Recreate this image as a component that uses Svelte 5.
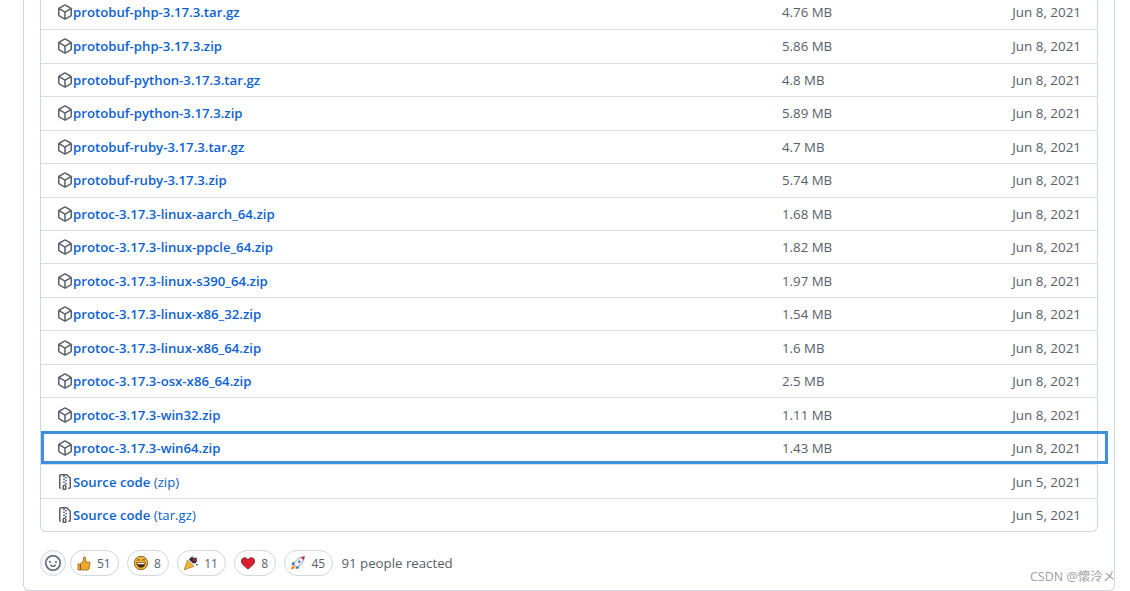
<script>
const assets = [
  ['protobuf-php-3.17.3.tar.gz', '4.76 MB', 'Jun 8, 2021'],
  ['protobuf-php-3.17.3.zip', '5.86 MB', 'Jun 8, 2021'],
  ['protobuf-python-3.17.3.tar.gz', '4.8 MB', 'Jun 8, 2021'],
  ['protobuf-python-3.17.3.zip', '5.89 MB', 'Jun 8, 2021'],
  ['protobuf-ruby-3.17.3.tar.gz', '4.7 MB', 'Jun 8, 2021'],
  ['protobuf-ruby-3.17.3.zip', '5.74 MB', 'Jun 8, 2021'],
  ['protoc-3.17.3-linux-aarch_64.zip', '1.68 MB', 'Jun 8, 2021'],
  ['protoc-3.17.3-linux-ppcle_64.zip', '1.82 MB', 'Jun 8, 2021'],
  ['protoc-3.17.3-linux-s390_64.zip', '1.97 MB', 'Jun 8, 2021'],
  ['protoc-3.17.3-linux-x86_32.zip', '1.54 MB', 'Jun 8, 2021'],
  ['protoc-3.17.3-linux-x86_64.zip', '1.6 MB', 'Jun 8, 2021'],
  ['protoc-3.17.3-osx-x86_64.zip', '2.5 MB', 'Jun 8, 2021'],
  ['protoc-3.17.3-win32.zip', '1.11 MB', 'Jun 8, 2021'],
  ['protoc-3.17.3-win64.zip', '1.43 MB', 'Jun 8, 2021']
]
const sources = [['(zip)', 'Jun 5, 2021'], ['(tar.gz)', 'Jun 5, 2021']]
</script>

<div class="page">
  <div class="release">
    <div class="assets">
      {#each assets as a}
        <div class="row">
          <svg class="ico" viewBox="0 0 16 16" width="16" height="16"><path fill="#57606a" fill-rule="evenodd" d="M8.878.392a1.75 1.75 0 00-1.756 0l-5.25 3.045A1.75 1.75 0 001 4.951v6.098c0 .624.332 1.2.872 1.514l5.25 3.045a1.75 1.75 0 001.756 0l5.25-3.045c.54-.313.872-.89.872-1.514V4.951c0-.624-.332-1.2-.872-1.514L8.878.392zM7.875 1.69a.25.25 0 01.25 0l4.63 2.685L8 7.133 3.245 4.375l4.63-2.685zM2.5 5.677v5.372c0 .09.047.171.125.216l4.625 2.683V8.432L2.5 5.677zm6.25 8.271l4.625-2.683a.25.25 0 00.125-.216V5.677L8.75 8.432v5.516z"/></svg>
          <span class="name">{a[0]}</span>
          <span class="size">{a[1]}</span>
          <span class="date">{a[2]}</span>
        </div>
      {/each}
      {#each sources as s}
        <div class="row">
          <svg class="ico" viewBox="0 0 16 16" width="16" height="16"><path fill="#57606a" fill-rule="evenodd" d="M3.5 1.75a.25.25 0 01.25-.25h3a.75.75 0 000 1.5h.5a.75.75 0 000-1.5h2.086a.25.25 0 01.177.073l2.914 2.914a.25.25 0 01.073.177v8.586a.25.25 0 01-.25.25h-.5a.75.75 0 000 1.5h.5A1.75 1.75 0 0014 13.25V4.664c0-.464-.184-.909-.513-1.237L10.573.513A1.75 1.75 0 009.336 0H3.75A1.75 1.75 0 002 1.750v11.5c0 .649.353 1.214.874 1.515a.75.75 0 10.752-1.298.25.25 0 01-.126-.217V1.750zM8.750 3a.75.75 0 000 1.500h.5a.75.75 0 000-1.500h-.5zM6 5.250a.75.75 0 01.75-.75h.5a.75.75 0 010 1.500h-.5A.75.75 0 016 5.250zm2 1.500A.75.75 0 018.750 6h.5a.75.75 0 010 1.500h-.5A.75.75 0 018 6.750zm-1.250.75a.75.75 0 000 1.500h.5a.75.75 0 000-1.500h-.5zM8 9.750A.75.75 0 018.750 9h.5a.75.75 0 010 1.500h-.5A.75.75 0 018 9.750zm-.75.750a1.750 1.750 0 00-1.750 1.750v3c0 .414.336.750.750.750h2.500a.750.750 0 00.750-.750v-3a1.750 1.750 0 00-1.750-1.750h-.5zM7 12.250a.250.250 0 01.250-.250h.5a.250.250 0 01.250.250v2.250H7v-2.250z"/></svg>
          <span class="name">Source code <span class="ext">{s[0]}</span></span>
          <span class="size"></span>
          <span class="date">{s[1]}</span>
        </div>
      {/each}
    </div>

    <div class="reactions">
      <button class="add" aria-label="Add reaction">
        <svg viewBox="0 0 16 16" width="16" height="16"><path fill="#57606a" fill-rule="evenodd" d="M1.5 8a6.5 6.5 0 1113 0 6.5 6.5 0 01-13 0zM8 0a8 8 0 100 16A8 8 0 008 0zM5 8a1 1 0 100-2 1 1 0 000 2zm7-1a1 1 0 11-2 0 1 1 0 012 0zM5.32 9.636a.75.75 0 011.038.175l.007.009c.103.118.22.222.35.31.264.178.683.37 1.285.37.602 0 1.02-.192 1.285-.371.13-.088.247-.192.35-.31l.007-.008a.75.75 0 111.222.87l-.614-.431c.614.43.614.431.613.431v.001l-.001.002-.002.003-.005.007-.014.019a1.984 1.984 0 01-.184.213c-.16.166-.338.316-.53.445-.63.418-1.37.638-2.127.629-.946 0-1.652-.308-2.126-.63a3.32 3.32 0 01-.715-.657l-.014-.02-.005-.006-.002-.003v-.002h-.001l.613-.432-.614.43a.75.75 0 01.183-1.044z"/></svg>
      </button>
      <span class="pill">
        <svg viewBox="0 0 16 16" width="16" height="16"><path fill="#f0a92d" stroke="#7d5510" stroke-width=".7" d="M2 9h2.500v6H2zM4.500 9l2.800-3.500L7.800 2c1.400-.3 2.300.8 2 2.600L9.500 7H13c1 0 1.400 1 1 1.800L13 14c-.2.600-.7 1-1.300 1H4.500z"/></svg>
        <span>51</span>
      </span>
      <span class="pill">
        <svg viewBox="0 0 16 16" width="16" height="16"><circle cx="8" cy="8" r="6.700" fill="#f5b52e" stroke="#6e4c12" stroke-width=".8"/><path fill="#43290d" d="M3.400 7.300h9.200c0 3-2 5.400-4.600 5.400S3.400 10.300 3.400 7.300z"/><path fill="#fff" d="M4.200 7.800h7.600l-.4 1.500H4.600z"/><path fill="none" stroke="#43290d" stroke-width="1" d="M4 5.400c.6-1 2-1 2.600 0M9.400 5.400c.6-1 2-1 2.600 0"/></svg>
        <span>8</span>
      </span>
      <span class="pill">
        <svg viewBox="0 0 16 16" width="16" height="16"><path fill="#f2b632" stroke="#7d5510" stroke-width=".5" d="M4.500 5l6.500 6.200L1 15z"/><path fill="#2b2b40" d="M6 4.500l2-2.500 3 1 2.500-.5.500 3-1 2.500-3 .5z"/><circle cx="11.500" cy="5" r="1.500" fill="#c6263c"/><path fill="#2f6fb5" d="M8.500 2l1.500-1 .6 1.700z"/><path fill="#1f3f7a" d="M12.500 9l2.500.3-1 1.700z"/></svg>
        <span>11</span>
      </span>
      <span class="pill">
        <svg viewBox="0 0 16 16" width="16" height="16"><path fill="#dc1f2e" stroke="#4a0d12" stroke-width=".7" d="M8 14C4.500 11.300 1.400 9 1.400 6c0-2 1.500-3.300 3.200-3.300C6 2.700 7.300 3.400 8 4.700c.7-1.300 2-2 3.400-2 1.700 0 3.200 1.300 3.200 3.300 0 3-3.100 5.300-6.600 8z"/></svg>
        <span>8</span>
      </span>
      <span class="pill">
        <svg viewBox="0 0 16 16" width="16" height="16"><path fill="#3f7fc0" d="M4.500 6.500L1.500 8l.5 2.500 3-.5zM9.500 11l-1.500 3-2.500-.5.5-3z"/><path fill="#f08a1e" d="M3.500 10.500c-1.500.4-2.300 1.800-2.500 4 2.200-.2 3.600-1 4-2.500z"/><path fill="#eef2f6" stroke="#5b6b7a" stroke-width=".6" d="M3.800 9C5.300 5.300 8.800 2.300 14.500 1.500 13.700 7.200 10.700 10.700 7 12.200z"/><path fill="#d3232f" d="M10.800 2.300l3.700-.8-.8 3.700z"/><circle cx="9.300" cy="6.700" r="1.300" fill="#3f7fc0"/></svg>
        <span>45</span>
      </span>
      <span class="people">91 people reacted</span>
    </div>
  </div>

  <div class="mark"></div>
  <div class="watermark">CSDN @懷泠メ</div>
</div>

<style>
:global(body) {
  margin: 0;
  background: #fff;
  overflow: hidden;
}

.page {
  position: relative;
  width: 1130px;
  height: 591px;
  overflow: hidden;
  font-family: "Open Sans", "Noto Sans CJK SC", sans-serif;
  font-size: 13.25px;
  color: #57606a;
}

.release {
  box-sizing: border-box;
  width: 1092px;
  height: 595px;
  margin: -4.3px 0 0 23px;
  padding: 0 16px;
  border: 1px solid #d0d7de;
  border-top: 0;
  border-radius: 0 0 6px 6px;
}

.assets {
  box-sizing: border-box;
  width: 1058px;
  border: 1px solid #d0d7de;
  border-top: 0;
  border-radius: 0 0 6px 6px;
}

.row {
  box-sizing: border-box;
  height: 33.47px;
  display: flex;
  align-items: center;
  padding-left: 16px;
  border-top: 1px solid #d8dee4;
}
.row:first-child {
  border-top: 0;
}

.ico {
  flex: none;
}

.name {
  flex: 1;
  color: #0d62d2;
  font-size: 13.2px;
  font-weight: 600;
}
.ext {
  font-weight: 400;
}

.size {
  width: 200px;
}
.date {
  width: 115px;
  padding-right: 16px;
  box-sizing: border-box;
  text-align: right;
  font-size: 13.4px;
}

.reactions {
  display: flex;
  align-items: center;
  gap: 8px;
  margin-top: 17.8px;
}

.add {
  box-sizing: border-box;
  width: 26px;
  height: 26px;
  margin-right: -4px;
  padding: 0;
  display: flex;
  align-items: center;
  justify-content: center;
  background: #f6f8fa;
  border: 1px solid #d0d7de;
  border-radius: 50%;
}

.pill {
  box-sizing: border-box;
  height: 26px;
  padding: 0 7.3px 0 5px;
  display: flex;
  align-items: center;
  gap: 5px;
  border: 1px solid #d0d7de;
  border-radius: 13px;
  font-size: 12px;
}

.people {
  font-size: 13.25px;
}

.mark {
  position: absolute;
  left: 41px;
  top: 431px;
  width: 1067px;
  height: 33px;
  box-sizing: border-box;
  border: 3px solid #3c90de;
}

.watermark {
  position: absolute;
  left: 1030px;
  top: 566px;
  font-size: 12.5px;
  color: #a0a0a0;
  white-space: nowrap;
}
</style>
